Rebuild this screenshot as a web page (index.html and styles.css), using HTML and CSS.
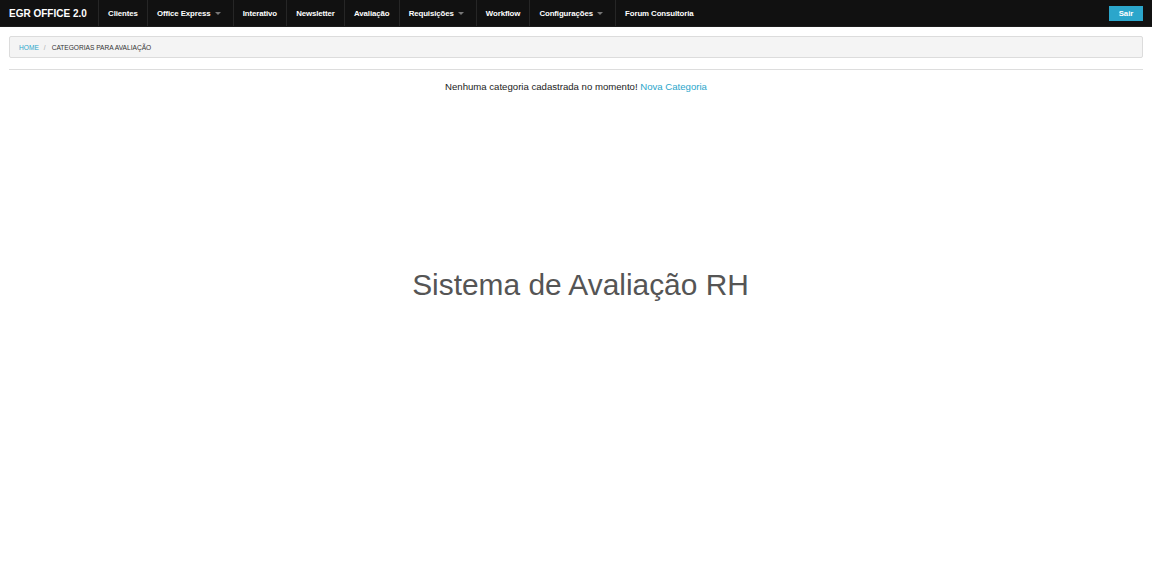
FILE: index.html
```html
<!DOCTYPE html>
<html lang="pt-BR">
<head>
    <meta charset="UTF-8">
    <meta name="viewport" content="width=device-width, initial-scale=1.0">
    <title>Sistema de Avaliação RH</title>
    <link rel="stylesheet" href="styles.css">
</head>
<body>
    <nav class="top-bar">
        <div class="brand">EGR OFFICE 2.0</div>
        <ul class="menu">
            <li class="menu-item"><a href="#">Clientes</a></li>
            <li class="menu-item has-dropdown"><a href="#">Office Express</a></li>
            <li class="menu-item"><a href="#">Interativo</a></li>
            <li class="menu-item"><a href="#">Newsletter</a></li>
            <li class="menu-item"><a href="#">Avaliação</a></li>
            <li class="menu-item has-dropdown"><a href="#">Requisições</a></li>
            <li class="menu-item"><a href="#">Workflow</a></li>
            <li class="menu-item has-dropdown"><a href="#">Configurações</a></li>
            <li class="menu-item"><a href="#">Forum Consultoria</a></li>
        </ul>
        <a href="#" class="logout">Sair</a>
    </nav>

    <div class="content">
        <ul class="breadcrumbs">
            <li><a href="#">Home</a></li>
            <li class="current">Categorias para avaliação</li>
        </ul>
        <hr class="divider">
        <p class="empty-msg">Nenhuma categoria cadastrada no momento! <a href="#">Nova Categoria</a></p>
        <h1 class="system-title">Sistema de Avaliação RH</h1>
    </div>
</body>
</html>
```

FILE: styles.css
```css
body {
    margin: 0;
    font-family: "Liberation Sans", Arial, sans-serif;
    color: #222;
    background: #fff;
}
a {
    text-decoration: none;
}
.top-bar {
    display: flex;
    align-items: stretch;
    height: 26px;
    background-color: #111;
    border-bottom: 1px solid #1c1c1c;
}
.brand {
    display: flex;
    align-items: center;
    width: 89px;
    padding-left: 9px;
    color: #fff;
    font-weight: bold;
    font-size: 10px;
}
.menu {
    display: flex;
    margin: 0;
    padding: 0;
    list-style: none;
    flex: 1;
}
.menu-item {
    display: flex;
    align-items: center;
    border-left: 1px solid #262626;
}
.menu-item a {
    display: block;
    padding: 0 9.1px;
    color: #fff;
    font-weight: bold;
    font-size: 7.85px;
    letter-spacing: -0.1px;
}
.has-dropdown a {
    position: relative;
    padding-right: 22px;
}
.has-dropdown a::after {
    content: "";
    position: absolute;
    right: 12px;
    top: 50%;
    margin-top: -1px;
    border-left: 3px solid transparent;
    border-right: 3px solid transparent;
    border-top: 3px solid #777;
}
.logout {
    align-self: center;
    margin-right: 9px;
    width: 34px;
    height: 15px;
    line-height: 15px;
    text-align: center;
    background-color: #2ba6cb;
    color: #fff;
    font-weight: bold;
    font-size: 7.8px;
}
.content {
    padding: 9px 9px 0;
}
.breadcrumbs {
    display: flex;
    align-items: center;
    height: 20px;
    margin: 0;
    padding: 0 9px;
    list-style: none;
    background-color: #f4f4f4;
    border: 1px solid #dcdcdc;
    border-radius: 2px;
    font-size: 6.6px;
    text-transform: uppercase;
}
.breadcrumbs a {
    color: #2ba6cb;
}
.breadcrumbs li + li::before {
    content: "/";
    margin: 0 6px 0 5px;
    color: #aaa;
}
.breadcrumbs .current {
    color: #333;
}
.divider {
    margin: 11px 0 0;
    border: 0;
    border-top: 1px solid #ddd;
}
.empty-msg {
    margin: 10px 0 0;
    text-align: center;
    font-size: 9.6px;
    line-height: 14px;
    color: #222;
}
.empty-msg a {
    color: #2ba6cb;
}
.system-title {
    margin: 173px 0 0;
    padding-left: 9px;
    text-align: center;
    font-weight: normal;
    font-size: 29.9px;
    line-height: 36px;
    color: #555;
}
```
